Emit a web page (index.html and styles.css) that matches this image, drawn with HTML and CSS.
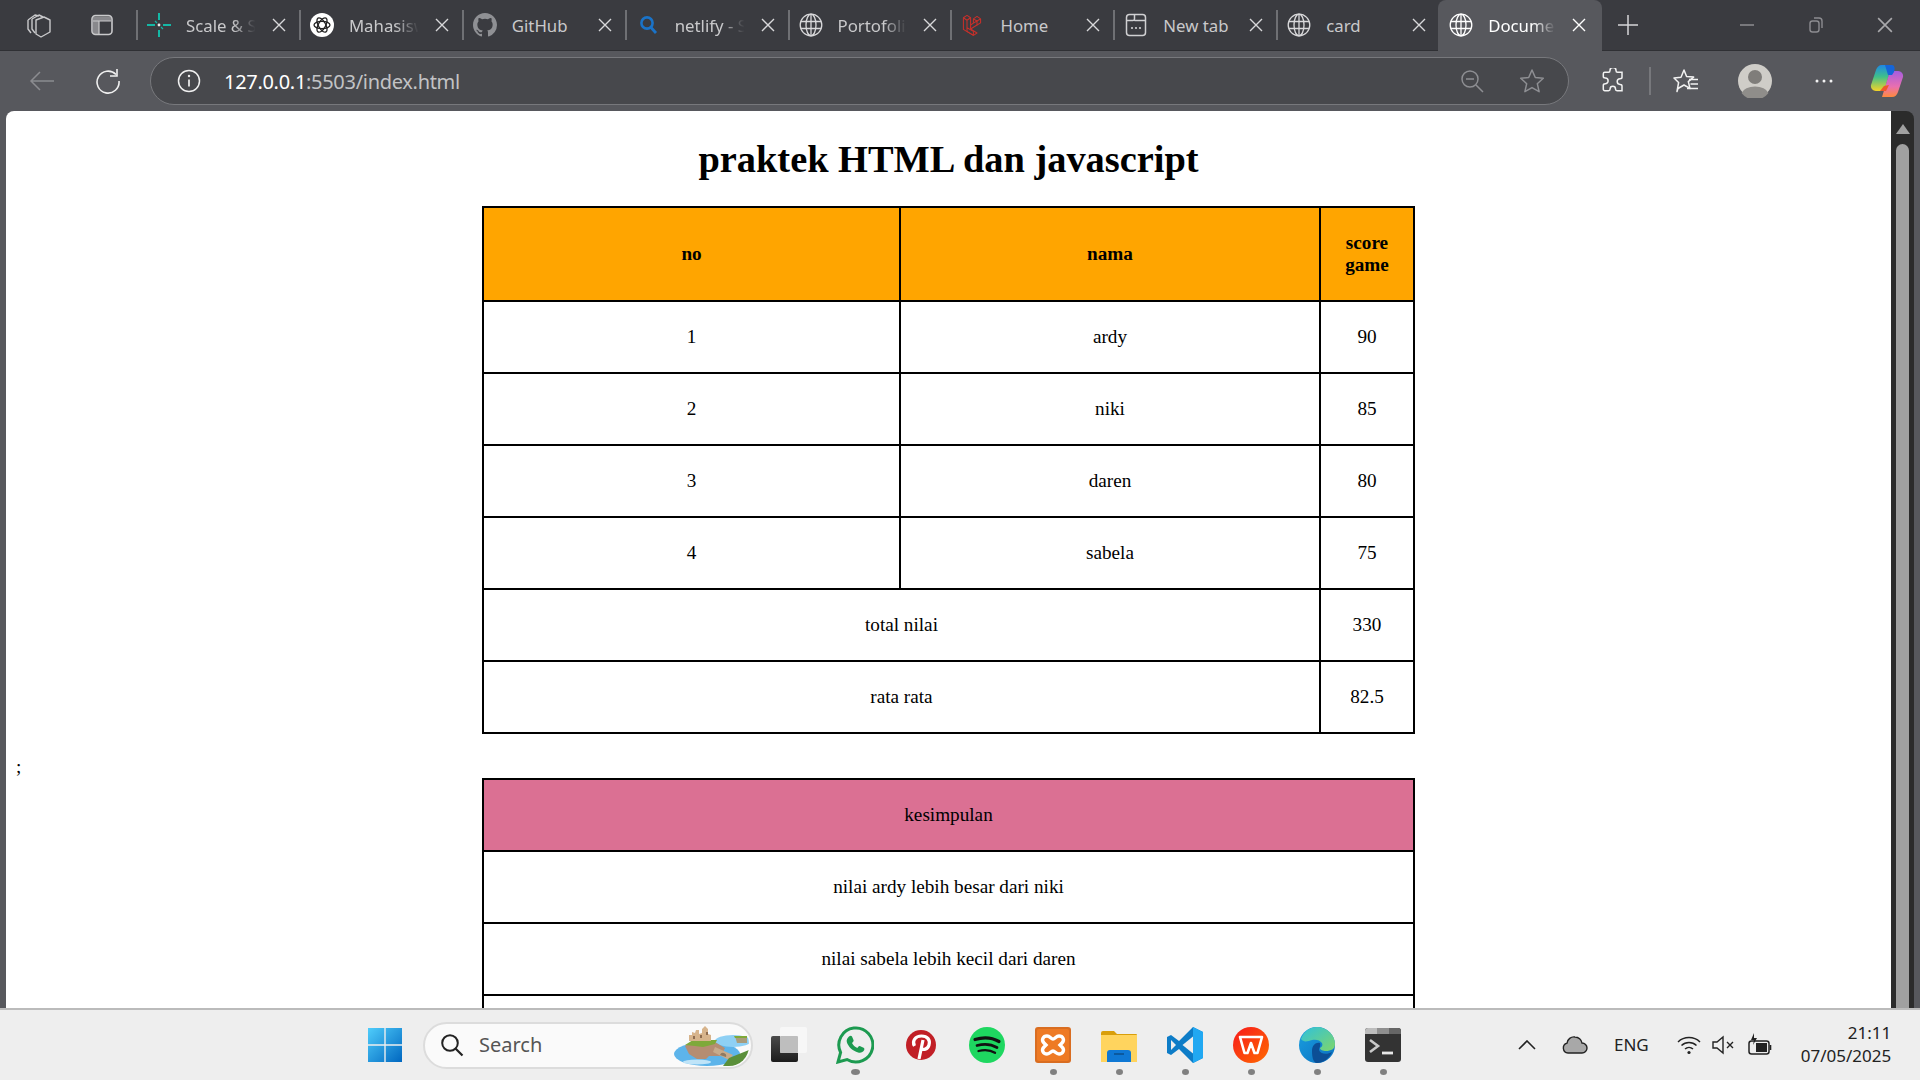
FILE: index.html
```html
<!DOCTYPE html>
<html lang="id">
<head>
    <meta charset="UTF-8">
    <meta name="viewport" content="width=device-width, initial-scale=1.0">
    <title>Document</title>
    <link rel="stylesheet" href="styles.css">
</head>
<body>
    <svg class="sprites" width="0" height="0">
        <symbol id="globe" viewBox="0 0 24 24"><g fill="none" stroke="currentColor" stroke-width="1.3"><circle cx="12" cy="12" r="10.8"/><ellipse cx="12" cy="12" rx="5" ry="10.8"/><path d="M12 1.2v21.6M1.8 8.5h20.4M1.8 15.5h20.4"/></g></symbol>
        <symbol id="close" viewBox="0 0 14 14"><path d="M1 1l12 12M13 1L1 13" fill="none" stroke="currentColor" stroke-width="1.4"/></symbol>
    </svg>

    <div class="tabstrip">
        <svg class="strip-icon first" width="26" height="28" viewBox="0 0 26 28"><g fill="none" stroke="#c9c9cb" stroke-width="1.4" stroke-linejoin="round"><path d="M2 9l7-5 4 1M2 9v9l3 4"/><path d="M6 8l7-4 4 2M6 8v10l3 4"/><path d="M10 9l8-3 6 3v12l-9 5-5-3z"/></g></svg>
        <svg class="strip-icon second" width="24" height="24" viewBox="0 0 24 24"><rect x="2" y="2.500" width="20" height="19" rx="3.500" fill="none" stroke="#c9c9cb" stroke-width="1.600"/><path d="M3 3.500h18V8H9v13H3z" fill="#c9c9cb" opacity=".55"/><path d="M3 8h18M9 8v13" stroke="#c9c9cb" stroke-width="1.200" fill="none"/></svg>
        <span class="tab-sep"></span>

        <div class="tab">
            <svg class="tab-icon" viewBox="0 0 24 24"><g stroke="#14b8a6" stroke-width="2" fill="none"><path d="M0 12h8M16 12h8M12 0v7M12 17v7"/></g><path d="M8 8l2 2M16 16l-2-2" stroke="#14b8a6" stroke-width="1.200"/><circle cx="12" cy="12" r="1.400" fill="#e8e8e8"/></svg>
            <span class="tab-title">Scale &amp; Ship</span>
            <svg class="tab-close"><use href="#close"/></svg>
        </div>
        <span class="tab-sep"></span>
        <div class="tab">
            <svg class="tab-icon" viewBox="0 0 24 24"><circle cx="12" cy="12" r="12" fill="#fff"/><g fill="none" stroke="#222" stroke-width="1.300"><ellipse cx="12" cy="12" rx="8" ry="3.600"/><ellipse cx="12" cy="12" rx="8" ry="3.600" transform="rotate(60 12 12)"/><ellipse cx="12" cy="12" rx="8" ry="3.600" transform="rotate(120 12 12)"/></g></svg>
            <span class="tab-title">Mahasiswa Baru</span>
            <svg class="tab-close"><use href="#close"/></svg>
        </div>
        <span class="tab-sep"></span>
        <div class="tab">
            <svg class="tab-icon" viewBox="0 0 16 16"><path fill="#8f9094" d="M8 0C3.580 0 0 3.580 0 8c0 3.540 2.290 6.530 5.470 7.590.4.070.55-.17.55-.38v-1.340c-2.230.48-2.700-1.070-2.700-1.070-.36-.92-.89-1.170-.89-1.170-.73-.5.050-.49.050-.49.8.060 1.230.83 1.230.83.710 1.220 1.870.87 2.330.66.070-.52.28-.87.5-1.070-1.780-.2-3.640-.89-3.640-3.950 0-.87.31-1.590.82-2.150-.08-.2-.36-1.020.08-2.120 0 0 .67-.21 2.200.82a7.600 7.600 0 0 1 4 0c1.530-1.040 2.200-.82 2.200-.82.44 1.100.16 1.920.08 2.120.51.56.82 1.270.82 2.150 0 3.070-1.870 3.750-3.650 3.950.29.25.54.73.54 1.480v2.200c0 .21.15.46.55.38A8 8 0 0 0 16 8c0-4.420-3.580-8-8-8z"/></svg>
            <span class="tab-title plain">GitHub</span>
            <svg class="tab-close"><use href="#close"/></svg>
        </div>
        <span class="tab-sep"></span>
        <div class="tab">
            <svg class="tab-icon" viewBox="0 0 24 24"><circle cx="11" cy="10" r="5.600" fill="none" stroke="#1a73c8" stroke-width="2.600"/><path d="M15 14.500l5 5.500" stroke="#1a73c8" stroke-width="2.800"/></svg>
            <span class="tab-title">netlify - Search</span>
            <svg class="tab-close"><use href="#close"/></svg>
        </div>
        <span class="tab-sep"></span>
        <div class="tab">
            <svg class="tab-icon globe"><use href="#globe"/></svg>
            <span class="tab-title">Portofolio Saya</span>
            <svg class="tab-close"><use href="#close"/></svg>
        </div>
        <span class="tab-sep"></span>
        <div class="tab">
            <svg class="tab-icon" viewBox="0 0 26 30"><g fill="none" stroke="#c8302a" stroke-width="1.300" stroke-linejoin="round"><path d="M1 6l4.500-3L10 6v14l8 5-4.500 3L5 23l-4-2.500z"/><path d="M5.500 9L10 6M5.500 9L1 6M5.500 9v14l8 5M13.500 28v-5l-8-4.500"/><path d="M10 20l8-5V10l-4.500 2.700L10 15"/><path d="M18 10l-4.500-2.700 4.500-3 4.500 3zM22.500 7.300v5L18 15M13.500 7.300v5.400"/></g></svg>
            <span class="tab-title plain">Home</span>
            <svg class="tab-close"><use href="#close"/></svg>
        </div>
        <span class="tab-sep"></span>
        <div class="tab">
            <svg class="tab-icon" viewBox="0 0 24 24"><g fill="none" stroke="#d0d0d2" stroke-width="1.500"><rect x="2.500" y="1.500" width="19" height="21" rx="3"/><path d="M2.500 7.500h6.500a1.500 1.500 0 0 0 1.500-1.500V1.500M10.500 7.500h11"/></g><g fill="#d0d0d2"><circle cx="8" cy="15" r="1.100"/><circle cx="12" cy="15" r="1.100"/><circle cx="16" cy="15" r="1.100"/></g></svg>
            <span class="tab-title plain">New tab</span>
            <svg class="tab-close"><use href="#close"/></svg>
        </div>
        <span class="tab-sep"></span>
        <div class="tab">
            <svg class="tab-icon globe"><use href="#globe"/></svg>
            <span class="tab-title plain">card</span>
            <svg class="tab-close"><use href="#close"/></svg>
        </div>
        <div class="tab active">
            <svg class="tab-icon globe"><use href="#globe"/></svg>
            <span class="tab-title">Document</span>
            <svg class="tab-close"><use href="#close"/></svg>
        </div>
        <svg class="new-tab" width="22" height="22" viewBox="0 0 22 22"><path d="M11 1v20M1 11h20" stroke="#d6d6d8" stroke-width="1.500"/></svg>

        <div class="window-controls">
            <svg width="16" height="16" viewBox="0 0 16 16"><path d="M1 8h14" stroke="#9b9b9e" stroke-width="1.300"/></svg>
            <svg width="16" height="18" viewBox="0 0 16 18"><g fill="none" stroke="#8c8c90" stroke-width="1.400"><rect x="2" y="5" width="9" height="11" rx="2.500"/><path d="M6 2h5a3 3 0 0 1 3 3v7"/></g></svg>
            <svg width="16" height="16" viewBox="0 0 14 14"><use href="#close" color="#a9a9ac"/></svg>
        </div>
    </div>

    <div class="toolbar">
        <svg class="tool back" width="26" height="22" viewBox="0 0 26 22"><path d="M25 11H2M11 2l-9 9 9 9" fill="none" stroke="#8b8c90" stroke-width="1.500"/></svg>
        <svg class="tool reload" width="26" height="26" viewBox="0 0 26 26"><path d="M21 6.500A11 11 0 1 0 24 13" fill="none" stroke="#f0f0f0" stroke-width="1.600"/><path d="M22 1v7h-7" fill="none" stroke="#f0f0f0" stroke-width="1.600"/></svg>
        <div class="address">
            <svg width="24" height="24" viewBox="0 0 24 24"><circle cx="12" cy="12" r="10.500" fill="none" stroke="#f0f0f0" stroke-width="1.500"/><path d="M12 10.500v7" stroke="#f0f0f0" stroke-width="1.700"/><circle cx="12" cy="7" r="1.200" fill="#f0f0f0"/></svg>
            <span class="url"><b>127.0.0.1</b>:5503/index.html</span>
            <svg class="zoom-out" width="24" height="24" viewBox="0 0 24 24"><g fill="none" stroke="#8e8f93" stroke-width="1.500"><circle cx="10" cy="10" r="8"/><path d="M6 10h8M16 16l7 7"/></g></svg>
            <svg class="star" width="26" height="26" viewBox="0 0 26 26"><path d="M13 2l3.300 7.500 8 .8-6 5.400 1.800 8L13 19.600l-7.100 4.100 1.800-8-6-5.400 8-.8z" fill="none" stroke="#8e8f93" stroke-width="1.500" stroke-linejoin="round"/></svg>
        </div>
        <svg class="tool puzzle" width="24" height="26" viewBox="0 0 24 26"><path d="M9 2.500a3 3 0 0 1 6 0c0 1 .5 1.800 1.500 1.800H21v5c0 1-1 1.500-2 1.500a2.800 2.800 0 0 0 0 5.600c1 0 2 .5 2 1.500v4.800h-5c-1 0-1.500-.8-1.500-1.700a2.700 2.700 0 0 0-5.400 0c0 .9-.6 1.700-1.600 1.700H3.800a1.500 1.500 0 0 1-1.500-1.500v-4c0-1 1-1.500 2-1.500a2.800 2.800 0 0 0 0-5.600c-1 0-2-.6-2-1.500V5.800a1.500 1.500 0 0 1 1.500-1.500h3.700C8.500 4.300 9 3.500 9 2.500z" fill="none" stroke="#f2f2f2" stroke-width="1.500"/></svg>
        <span class="tool-sep"></span>
        <svg class="tool favs" width="26" height="26" viewBox="0 0 26 26"><path d="M11 2l2.600 6.500 7 .6-5.300 4.500 1.700 6.800L11 17l-6 3.500-1 3 1.600-9L1 10l7-.8z" fill="none" stroke="#f2f2f2" stroke-width="1.500" stroke-linejoin="round"/><path d="M16 11.500h9M17.500 16h7.500M14 20.500h11" stroke="#f2f2f2" stroke-width="1.500"/></svg>
        <svg class="tool avatar" width="34" height="34" viewBox="0 0 34 34"><circle cx="17" cy="17" r="17" fill="#cfcdc8"/><circle cx="17" cy="13" r="7" fill="#7f7d7a"/><path d="M3.500 29a14 9 0 0 1 27 0A17 17 0 0 1 3.500 29z" fill="#8f8d8a"/></svg>
        <svg class="tool dots" width="20" height="6" viewBox="0 0 20 6"><circle cx="3" cy="3" r="1.500" fill="#f2f2f2"/><circle cx="10" cy="3" r="1.500" fill="#f2f2f2"/><circle cx="17" cy="3" r="1.500" fill="#f2f2f2"/></svg>
        <svg class="tool copilot" width="34" height="36" viewBox="0 0 34 36">
            <defs>
                <linearGradient id="cp1" x1="0" y1="0" x2="0" y2="1"><stop offset="0" stop-color="#1e88e5"/><stop offset=".45" stop-color="#3fc08a"/><stop offset="1" stop-color="#f5d327"/></linearGradient>
                <linearGradient id="cp2" x1="0" y1="0" x2="0" y2="1"><stop offset="0" stop-color="#a45de0"/><stop offset=".6" stop-color="#e96fb0"/><stop offset="1" stop-color="#ff8a3c"/></linearGradient>
            </defs>
            <path d="M12 2h10l-8 26H6a5 5 0 0 1-5-6l5-15c1-3 3-5 6-5z" fill="url(#cp1)"/>
            <path d="M22 34H12l8-26h8a5 5 0 0 1 5 6l-5 15c-1 3-3 5-6 5z" fill="url(#cp2)"/>
            <path d="M15 2h7c3 0 3 4 2 7l-2 3h-4z" fill="#1565d8"/>
            <path d="M10 28h6l3-6-5 1z" fill="#ef5a2a"/>
        </svg>
    </div>

    <div class="browser-body">
        <main class="page">
            <h1>praktek HTML dan javascript</h1>
            <table class="score-table">
                <colgroup>
                    <col class="col-no">
                    <col class="col-nama">
                    <col class="col-score">
                </colgroup>
                <thead>
                    <tr>
                        <th>no</th>
                        <th>nama</th>
                        <th>score game</th>
                    </tr>
                </thead>
                <tbody>
                    <tr><td>1</td><td>ardy</td><td>90</td></tr>
                    <tr><td>2</td><td>niki</td><td>85</td></tr>
                    <tr><td>3</td><td>daren</td><td>80</td></tr>
                    <tr><td>4</td><td>sabela</td><td>75</td></tr>
                    <tr><td colspan="2">total nilai</td><td>330</td></tr>
                    <tr><td colspan="2">rata rata</td><td>82.5</td></tr>
                </tbody>
            </table>
            <div class="stray">;</div>
            <table class="summary-table">
                <thead>
                    <tr><th>kesimpulan</th></tr>
                </thead>
                <tbody>
                    <tr><td>nilai ardy lebih besar dari niki</td></tr>
                    <tr><td>nilai sabela lebih kecil dari daren</td></tr>
                    <tr><td>&nbsp;</td></tr>
                </tbody>
            </table>
        </main>
        <div class="scrollbar">
            <span class="scroll-up"></span>
            <span class="scroll-thumb"></span>
        </div>
    </div>

    <footer class="taskbar">
        <svg class="start" width="36" height="36" viewBox="0 0 36 36">
            <defs><linearGradient id="win" x1="0" y1="0" x2="1" y2="1"><stop offset="0" stop-color="#4fcdfb"/><stop offset="1" stop-color="#0067c0"/></linearGradient></defs>
            <path fill="url(#win)" d="M1 1h16.300v16.300H1zM18.700 1H35v16.300H18.700zM1 18.700h16.300V35H1zM18.700 18.700H35V35H18.700z"/>
        </svg>
        <div class="search">
            <svg width="24" height="24" viewBox="0 0 24 24"><circle cx="10" cy="10" r="7.800" fill="none" stroke="#222" stroke-width="2"/><path d="M15.500 15.500l7 7" stroke="#222" stroke-width="2.200"/></svg>
            <span class="search-label">Search</span>
            <svg class="search-art" width="76" height="42" viewBox="0 0 76 42">
                <ellipse cx="34" cy="30" rx="33" ry="12" fill="#5db4ea"/>
                <ellipse cx="60" cy="17" rx="18" ry="6" fill="#8ed0f4"/>
                <ellipse cx="24" cy="38" rx="14" ry="2.500" fill="#bfe4f8"/>
                <path d="M12 22l6-4h24l10 6-4 8H36l-3 3H24l-8-5z" fill="#b58d72"/>
                <path d="M12 21l8-5h24l-2 4-12 3-8-1z" fill="#7ea93a"/>
                <path d="M16 17v-6h3V8l3 1 1-3h3v4l3-1V5l3-3 3 3v5l3 1v6z" fill="#d7b48c"/>
                <path d="M20 12h2v3h-2zM27 11h2v3h-2zM33 8h2v3h-2z" fill="#8f6d50"/>
                <path d="M42 23l18 8-4 5-16-8z" fill="#c7ab8c"/>
                <path d="M47 31a3 3 0 0 1 6 2z" fill="#8f7a62"/>
                <path d="M56 34l20-8v6l-10 10H50z" fill="#5a8f3a"/>
                <path d="M62 12h12v7H64z" fill="#a99c7c"/>
                <path d="M61 12h13v2H62z" fill="#7ea93a"/>
            </svg>
        </div>
        <div class="taskbar-apps">
            <div class="app">
                <svg width="38" height="38" viewBox="0 0 38 38"><defs><linearGradient id="tv" x1="0" y1="0" x2="0" y2="1"><stop offset="0" stop-color="#4a4a4a"/><stop offset="1" stop-color="#1c1c1c"/></linearGradient></defs><rect x="1" y="10" width="27" height="26" rx="2" fill="url(#tv)"/><rect x="10" y="1" width="27" height="26" rx="2" fill="#f7f7f7"/><rect x="10" y="10" width="18" height="17" rx="1" fill="#bebebe"/></svg>
            </div>
            <div class="app running">
                <svg width="38" height="38" viewBox="0 0 38 38"><path d="M2 36l2.600-9.500A17 17 0 1 1 11 33.500z" fill="none" stroke="#1c9a50" stroke-width="3"/><path d="M13 10.500c1-1 2.500-1 3 0l1.500 3.500c.3.700 0 1.300-.5 1.900l-1 1.100c1 2.200 3 4 5.300 5l1.200-1.400c.5-.6 1.100-.7 1.800-.4l3.300 1.600c.9.400 1 1.400.5 2.400-1 2-3.500 3-6 2.300-5.500-1.500-10-6-11.300-10.500-.5-2 .5-4 2.200-5.500z" fill="#1c9a50"/></svg>
                <span class="run-dot wide"></span>
            </div>
            <div class="app">
                <svg width="38" height="38" viewBox="0 0 38 38"><circle cx="19" cy="19" r="15" fill="#c11f26"/><path d="M17 33l4-19M12.500 20c-3-5 1-10 7-10s9 4 7.500 9c-1 4-6 6-8.500 3" fill="none" stroke="#fff" stroke-width="3.200"/></svg>
            </div>
            <div class="app">
                <svg width="38" height="38" viewBox="0 0 38 38"><circle cx="19" cy="19" r="18" fill="#1ed760"/><g fill="none" stroke="#111" stroke-linecap="round"><path d="M7 13.500c8-2.500 17-2 24 2" stroke-width="3.200"/><path d="M9 19.500c7-2 14-1.500 20 2" stroke-width="2.700"/><path d="M10.500 25c6-1.500 12-1 16.500 1.800" stroke-width="2.300"/></g></svg>
            </div>
            <div class="app running">
                <svg width="38" height="38" viewBox="0 0 38 38"><rect x="1" y="1" width="36" height="36" rx="3" fill="#d96d21"/><rect x="3" y="3" width="32" height="32" rx="2" fill="#ee7a24"/><path d="M13 10c3 0 4 3 6 3s3-3 6-3c4 0 6 4 3 7l-2 2 2 2c3 3 1 7-3 7-3 0-4-3-6-3s-3 3-6 3c-4 0-6-4-3-7l2-2-2-2c-3-3-1-7 3-7z" fill="none" stroke="#fff" stroke-width="3.400"/></svg>
                <span class="run-dot"></span>
            </div>
            <div class="app running">
                <svg width="38" height="38" viewBox="0 0 38 38"><path d="M1 7a2 2 0 0 1 2-2h11l3 3h19a1 1 0 0 1 1 1v4H1z" fill="#d99e0b"/><path d="M1 9h36v27H1z" fill="#ffd45e"/><path d="M7 36v-9a3 3 0 0 1 3-3h18a3 3 0 0 1 3 3v9z" fill="#0f78d4"/><path d="M14 28h10" stroke="#0b4f8c" stroke-width="1.500"/></svg>
                <span class="run-dot"></span>
            </div>
            <div class="app running">
                <svg width="38" height="38" viewBox="0 0 38 38"><path d="M27 1l10 5v26l-10 5-14-14-8 6-4-2V11l4-2 8 6z" fill="#0d7cc7"/><path d="M27 1l10 5v26l-10 5z" fill="#21a8f2"/><path d="M5 14v10l5-5z" fill="#eee"/><path d="M27 10.500L16.500 19 27 27.500z" fill="#eee"/></svg>
                <span class="run-dot"></span>
            </div>
            <div class="app running">
                <svg width="38" height="38" viewBox="0 0 38 38">
                    <defs><linearGradient id="wps" x1="0" y1="0" x2="1" y2="1"><stop offset="0" stop-color="#f7191c"/><stop offset="1" stop-color="#ff6a00"/></linearGradient></defs>
                    <circle cx="19" cy="19" r="18" fill="url(#wps)"/>
                    <path d="M8 11h22l-4.500 16h-3L19 17l-3.500 10h-3z" fill="none" stroke="#fff" stroke-width="2.600" stroke-linejoin="round"/>
                </svg>
                <span class="run-dot"></span>
            </div>
            <div class="app running">
                <svg width="38" height="38" viewBox="0 0 38 38">
                    <defs>
                        <linearGradient id="edge1" x1="0" y1="0" x2="1" y2="1"><stop offset="0" stop-color="#2fc1dc"/><stop offset="1" stop-color="#7fd66a"/></linearGradient>
                        <linearGradient id="edge2" x1="0" y1="0" x2="1" y2="1"><stop offset="0" stop-color="#1aa0e0"/><stop offset="1" stop-color="#0b6fc0"/></linearGradient>
                    </defs>
                    <circle cx="19" cy="19" r="18" fill="url(#edge2)"/>
                    <path d="M3 13C6 5 12 1 19 1c10 0 18 8 18 17 0 5-4 7-9 7-3 0-6-1-6-3 2-1 3-3 2-5-2-3-6-4-10-3-4 1-8 3-11-1z" fill="url(#edge1)"/>
                    <path d="M14 25c0-6 4-9 8-8 1 3-1 5-1 7 1 4 8 5 13 2-3 7-9 11-15 11-4 0-5-7-5-12z" fill="#0c4f96"/>
                </svg>
                <span class="run-dot"></span>
            </div>
            <div class="app running">
                <svg width="36" height="36" viewBox="0 0 36 36"><rect y="1" width="36" height="34" rx="3" fill="#333"/><path d="M3 1h9v6H0V4a3 3 0 0 1 3-3z" fill="#bdbdbd"/><path d="M12 1h12v6H12z" fill="#8f8f8f"/><path d="M24 1h9a3 3 0 0 1 3 3v3H24z" fill="#666"/><path d="M5 13l8 6-8 6" fill="none" stroke="#c9c9c9" stroke-width="2.600"/><path d="M17 26h11" stroke="#e8e8e8" stroke-width="2.800"/></svg>
                <span class="run-dot"></span>
            </div>
        </div>
        <div class="tray">
            <svg class="tray-chevron" width="18" height="10" viewBox="0 0 18 10"><path d="M1 9l8-8 8 8" fill="none" stroke="#222" stroke-width="1.600"/></svg>
            <svg class="tray-cloud" width="26" height="20" viewBox="0 0 26 20"><path d="M6 18a5 5 0 0 1-1-9.800A7 7 0 0 1 13 2a7 7 0 0 1 7 6 5 5 0 0 1 0 10z" fill="#a8a8a8" stroke="#222" stroke-width="1.400"/></svg>
            <span class="tray-lang">ENG</span>
            <div class="tray-status">
                <svg width="24" height="20" viewBox="0 0 24 20"><g fill="none" stroke="#222" stroke-width="1.500"><path d="M1 7a16 16 0 0 1 22 0"/><path d="M4.500 10.500a11 11 0 0 1 15 0"/><path d="M8 14a6 6 0 0 1 8 0"/></g><circle cx="12" cy="17.500" r="1.600" fill="#222"/></svg>
                <svg width="24" height="20" viewBox="0 0 24 20"><path d="M1 7h4l6-5v16l-6-5H1z" fill="none" stroke="#222" stroke-width="1.400"/><path d="M15 7l6 6M21 7l-6 6" stroke="#222" stroke-width="1.400"/></svg>
                <svg width="26" height="24" viewBox="0 0 26 24"><rect x="2" y="8" width="20" height="13" rx="2.500" fill="none" stroke="#222" stroke-width="1.500"/><rect x="9" y="10" width="11" height="9" fill="#222"/><path d="M23.500 12v5" stroke="#222" stroke-width="1.600"/><path d="M7 0L4 7h3l-1 5 4-7H7z" fill="#222"/></svg>
            </div>
            <div class="clock">
                <span>21:11</span>
                <span>07/05/2025</span>
            </div>
        </div>
    </footer>
</body>
</html>
```

FILE: styles.css
```css
* {
    box-sizing: border-box;
}
html, body {
    height: 100%;
}
body {
    margin: 0;
    display: flex;
    flex-direction: column;
    height: 1080px;
    overflow: hidden;
    background-color: #57585d;
    font-family: "Noto Sans", "Open Sans", sans-serif;
}
.sprites {
    display: block;
    height: 0;
}

/* tab strip */
.tabstrip {
    display: flex;
    align-items: center;
    flex: 0 0 51px;
    height: 51px;
    padding-left: 26px;
    background-color: #3a3b40;
    border-bottom: 1px solid #2f3034;
}
.first {
    margin-right: 38px;
}
.second {
    margin-right: 22px;
}
.tab-sep {
    flex: 0 0 2px;
    width: 2px;
    height: 30px;
    background-color: #6f7074;
}
.tab {
    display: flex;
    align-items: center;
    flex: 0 0 160.9px;
    width: 160.9px;
    height: 51px;
    padding: 0 13px 0 9px;
    gap: 15px;
    color: #c9c9cb;
    font-size: 16.8px;
}
.tab-icon {
    flex: 0 0 24px;
    width: 24px;
    height: 24px;
}
.globe {
    color: #d8d8da;
}
.tab-title {
    flex: 1;
    min-width: 0;
    overflow: hidden;
    white-space: nowrap;
    -webkit-mask-image: linear-gradient(90deg, #000 65%, transparent 98%);
    mask-image: linear-gradient(90deg, #000 65%, transparent 98%);
}
.tab-title.plain {
    -webkit-mask-image: none;
    mask-image: none;
}
.tab-close {
    flex: 0 0 14px;
    width: 14px;
    height: 14px;
    color: #d8d8da;
}
.tab.active {
    flex: 0 0 164px;
    width: 164px;
    margin-left: -1px;
    padding: 0 16px 0 11px;
    background-color: #57585d;
    border-radius: 8px 8px 0 0;
    color: #fff;
}
.tab.active .tab-close {
    color: #fff;
}
.tab.active .globe {
    color: #fff;
}
.new-tab {
    margin-left: 15px;
}
.window-controls {
    display: flex;
    align-items: center;
    gap: 53px;
    margin-left: auto;
    padding-right: 27px;
}

/* toolbar */
.toolbar {
    display: flex;
    align-items: center;
    flex: 0 0 60px;
    height: 60px;
    padding: 0 0 0 29px;
    background-color: #57585d;
}
.toolbar > * {
    flex-shrink: 0;
}
.reload {
    margin-left: 40px;
}
.address {
    display: flex;
    align-items: center;
    width: 1419px;
    height: 48px;
    margin-left: 29px;
    margin-right: 32px;
    padding: 0 23px 0 26px;
    background-color: #47484c;
    border: 1.5px solid #77787c;
    border-radius: 24px;
}
.url {
    margin-left: 23px;
    color: #c2c3c5;
    font-size: 20px;
    letter-spacing: -0.3px;
}
.url b {
    color: #fff;
    font-weight: 400;
}
.zoom-out {
    margin-left: auto;
}
.star {
    margin-left: 35px;
}
.tool-sep {
    width: 2px;
    height: 28px;
    margin: 0 22px 0 24px;
    background-color: #77787c;
}
.avatar {
    margin-left: 39px;
}
.dots {
    margin-left: 42px;
}
.copilot {
    margin-left: 36px;
}

/* page */
.browser-body {
    display: flex;
    flex: 1;
    min-height: 0;
    padding: 0 6px;
}
.page {
    flex: 1;
    min-width: 0;
    overflow: hidden;
    background-color: #fff;
    border-radius: 8px 0 0 0;
    font-family: "Liberation Serif", "Times New Roman", serif;
    font-size: 19.2px;
    color: #000;
}
h1 {
    margin: 0;
    padding-top: 26px;
    height: 95px;
    font-size: 38.4px;
    line-height: 44px;
    text-align: center;
}
table {
    width: 933px;
    margin: 0 auto;
    border-collapse: collapse;
    table-layout: fixed;
}
th, td {
    border: 2px solid #000;
    padding: 0 8px;
    text-align: center;
    height: 72px;
    line-height: 22px;
}
.score-table th {
    height: 94px;
    background-color: orange;
}
.summary-table th {
    font-weight: normal;
    background-color: palevioletred;
}
.col-no {
    width: 44.8%;
}
.col-nama {
    width: 45.1%;
}
.col-score {
    width: 10.1%;
}
.stray {
    height: 44px;
    padding: 23px 0 0 10px;
    line-height: 20px;
}
.scrollbar {
    display: flex;
    flex-direction: column;
    align-items: center;
    flex: 0 0 23px;
    padding-top: 13px;
    background-color: #2b2b2b;
    border-radius: 0 8px 0 0;
}
.scroll-up {
    width: 0;
    height: 0;
    border-left: 7px solid transparent;
    border-right: 7px solid transparent;
    border-bottom: 10px solid #a0a0a0;
}
.scroll-thumb {
    flex: 1;
    width: 13px;
    margin-top: 10px;
    background-color: #a0a0a0;
    border-radius: 7px 7px 0 0;
}

/* taskbar */
.taskbar {
    display: flex;
    align-items: center;
    flex: 0 0 72px;
    height: 72px;
    padding-left: 367px;
    background-color: #eee;
    border-top: 2px solid #bbb;
}
.start {
    margin-right: 20px;
}
.search {
    display: flex;
    align-items: center;
    width: 330px;
    height: 47px;
    padding-left: 15px;
    background-color: #fafafa;
    border: 2px solid #dcdcdc;
    border-radius: 24px;
}
.search-label {
    margin-left: 15px;
    padding-bottom: 2px;
    color: #555;
    font-size: 20px;
}
.search-art {
    margin-left: auto;
    margin-right: 2px;
    border-radius: 0 20px 20px 0;
}
.taskbar-apps {
    display: flex;
    margin-left: 3px;
}
.app {
    position: relative;
    display: flex;
    align-items: center;
    justify-content: center;
    width: 66px;
    height: 70px;
}
.run-dot {
    position: absolute;
    left: 30px;
    bottom: 5px;
    width: 7px;
    height: 6px;
    background-color: #808080;
    border-radius: 50%;
}
.run-dot.wide {
    left: 29px;
    width: 9px;
}
.tray {
    display: flex;
    align-items: center;
    margin-left: 102px;
    color: #222;
}
.tray-cloud {
    margin-left: 26px;
}
.tray-lang {
    margin-left: 26px;
    padding-bottom: 2px;
    font-size: 17px;
}
.tray-status {
    display: flex;
    align-items: center;
    gap: 11px;
    margin-left: 28px;
}
.clock {
    display: flex;
    flex-direction: column;
    align-items: flex-end;
    gap: 3px;
    margin-left: 28px;
    padding-bottom: 2px;
    font-size: 17px;
    line-height: 20px;
}
```
